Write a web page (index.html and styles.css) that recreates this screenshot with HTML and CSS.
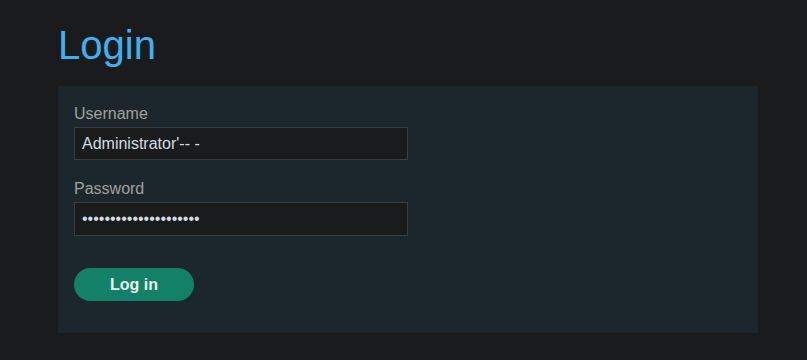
FILE: index.html
```html
<!DOCTYPE html>
<html>
<head>
<meta charset="utf-8">
<link rel="stylesheet" href="styles.css">
</head>
<body>
<div class="page">
  <h1 class="title">Login</h1>
  <form class="panel">
    <label class="label" for="username">Username</label>
    <input class="field" id="username" type="text" value="Administrator'-- -">
    <label class="label label-pw" for="password">Password</label>
    <input class="field" id="password" type="password" value="abcdefghijklmnopqrstu">
    <button class="btn" type="button">Log in</button>
  </form>
</div>
</body>
</html>
```
FILE: styles.css
```css
html, body {
  margin: 0;
  padding: 0;
  background: #1a1b1d;
  font-family: "Liberation Sans", Arial, sans-serif;
}
.page {
  padding: 21px 0 0 58px;
  width: 700px;
}
.title {
  margin: 0 0 17px 0;
  font-size: 40px;
  line-height: 48px;
  font-weight: normal;
  color: #3fb1f1;
}
.panel {
  display: flex;
  flex-direction: column;
  align-items: flex-start;
  background: #1c272d;
  padding: 18px 16px 32px 16px;
}
.label {
  font-size: 16px;
  line-height: 20px;
  color: #a0a09e;
  margin-bottom: 3px;
}
.label-pw {
  margin-top: 19px;
}
.field {
  box-sizing: border-box;
  width: 334px;
  height: 33px;
  margin: 0;
  padding: 0 7px;
  background: #1a1b1d;
  border: 1px solid #3b3e40;
  color: #d4dde3;
  font-family: "Liberation Sans", Arial, sans-serif;
  font-size: 16px;
  outline: none;
}
#password {
  height: 34px;
}
.btn {
  margin-top: 32px;
  width: 120px;
  height: 33px;
  border: none;
  border-radius: 17px;
  background: #138068;
  color: #e8f2ee;
  font-family: "Liberation Sans", Arial, sans-serif;
  font-size: 16px;
  font-weight: bold;
  padding: 0;
}
```
